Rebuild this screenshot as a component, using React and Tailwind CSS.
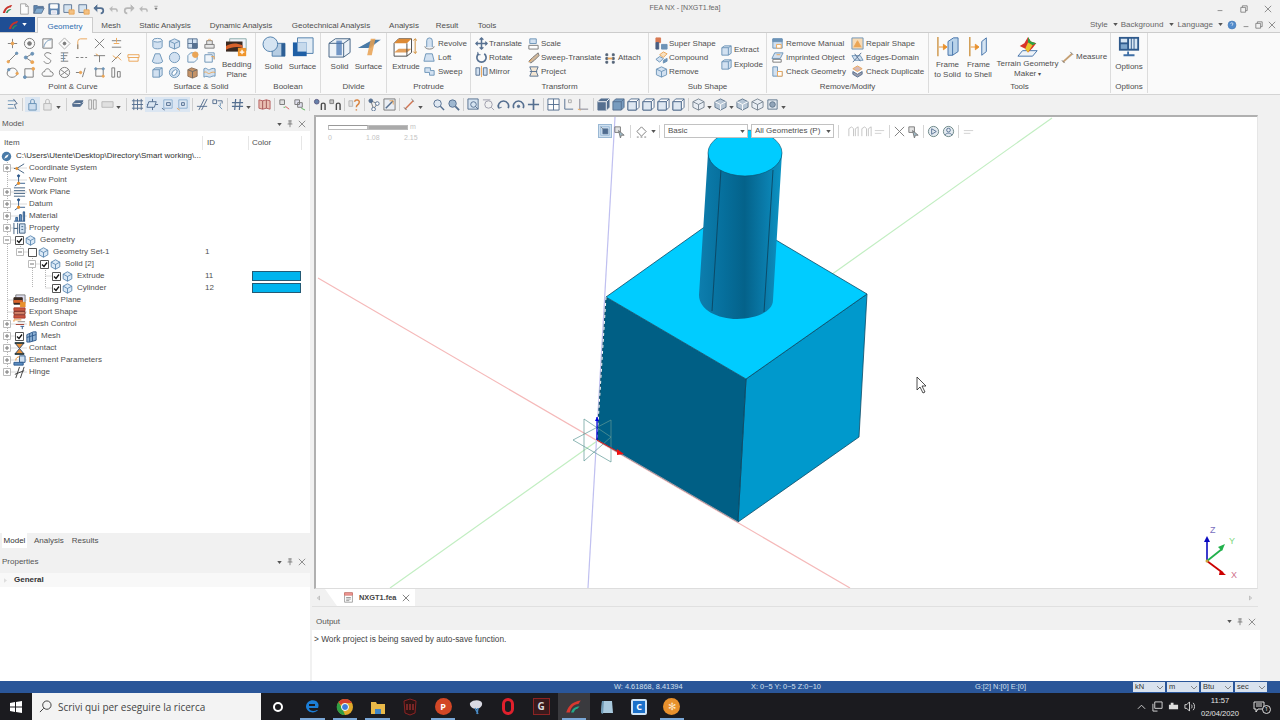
import React from "react";

const B = "#4a7ba8", D = "#5a5a5a", O = "#e8912d", L = "#c9dcef", K = "#2f4f78";
const p = (d, s = B, f = "none", w = 1) => <path d={d} stroke={s} fill={f} strokeWidth={w} />;
const c = (x, y, r, s = B, f = "none") => <circle cx={x} cy={y} r={r} stroke={s} fill={f} />;
const G = {
  point: <>{p("M7 2v10M2 7h10", D)}{c(7, 7, 1.5, O, O)}</>,
  target: <>{c(7, 7, 5.5, D)}{c(7, 7, 2, D, D)}</>,
  boxarc: <>{p("M2 2h10v10H2z", D)}{p("M3 11C4 6 7 3 11 3", B)}</>,
  diamond: <>{p("M7 1l6 6-6 6-6-6z", "#999")}{c(7, 7, 1.5, D, D)}</>,
  corner: <>{p("M3 13V5q0-3 3-3h7", O)}{p("M3 13V8", D)}</>,
  cross: <>{p("M2 2l10 10M12 2L2 12", D)}</>,
  tee: <>{p("M2 4h10M2 11h10", D)}{p("M7 1v5", O)}{p("M4 7h6", O)}</>,
  line: <>{p("M2 12L12 2", D)}{c(2.5, 11.5, 1.3, O, O)}{c(11.5, 2.5, 1.3, B, B)}</>,
  nodes: <>{p("M3 7L10 3M3 7l7 5", D)}{c(3, 7, 1.6, B, B)}{c(10, 3, 1.6, B, B)}{c(10, 12, 1.6, O, O)}</>,
  scurve: <>{p("M11 3C6 0 2 3 5 6s7 3 5 6-6 1-7-1", D)}</>,
  stack: <>{p("M3 2h8M3 5h7M3 8h5M3 11h8", D)}{p("M6 2v9", B)}</>,
  dash: <>{p("M1 7h3M6 7h3M11 7h2", D)}</>,
  tick: <>{p("M1 5h12", D)}{p("M7 5v7", D)}{p("M3 3l3 2", O)}</>,
  bolt: <>{p("M2 12L12 2", D)}{p("M3 5l4 3 1-2 4 4", O)}</>,
  tray: <>{p("M1 4h12v3H1zM2 7v4h10V7", O)}</>,
  loop: <>{p("M3 4C6 1 11 2 12 6s-3 7-7 6-5-5-2-8", D)}{c(3, 4, 1.3, B, B)}{c(12, 8, 1.3, O, O)}</>,
  sqdot: <>{p("M2 3h9v9H2z", D)}{c(11, 3, 1.5, O, O)}{c(2, 12, 1.5, B, B)}</>,
  cloud: <>{p("M3 11C0 10 1 6 4 6c0-4 6-4 6 0 4 0 4 5 1 5z", D)}</>,
  elx: <>{c(7, 7, 5.5, D)}{p("M3 4l8 6M11 4l-8 6", D)}</>,
  slash: <>{p("M1 7h5", D)}{p("M8 12l3-10", D)}{c(6, 7, 1.3, O, O)}</>,
  rect: <>{p("M3 3h8v8H3z", D)}{c(3, 3, 1.2, B, B)}{c(11, 11, 1.2, O, O)}{c(11, 3, 1.2, B, B)}</>,
  bars: <>{p("M2 2h3v10H2zM8 6h3v6H8z", D)}</>,
  cyl: <>{p("M2 3.5v7c0 3 10 3 10 0v-7", B, L)}<ellipse cx="7" cy="3.5" rx="5" ry="2" stroke={B} fill="#eaf2fa" /></>,
  cube: <>{p("M1.5 4.5L7 2l5.500 2.500v6L7 13l-5.500-2.500z", B, L)}{p("M1.500 4.500L7 7l5.500-2.500M7 7v6", B)}</>,
  box: <>{p("M2 4l3-2h7v8l-3 2H2z", B, L)}{p("M2 4h7v8M9 4l3-2", B)}</>,
  grid: <>{p("M2 2h10v10H2zM7 2v10M2 7h10", K, L)}{p("M7 7h5v5H7z", K, K)}</>,
  seat: <>{p("M2 12V8h10v4zM4 8V4h6v4", D, "#e3e3e3")}{p("M5 4l2-2 2 2", O)}</>,
  cone: <>{p("M4.500 3h5l3 8c0 3-11 3-11 0z", B, L)}</>,
  sphere: <>{c(7, 7, 5.5, B, L)}</>,
  boxo: <>{p("M2 5l3-3h7v7l-3 3H2z", B, "#eef4fa")}{c(10, 4, 3, O, O)}</>,
  boxs: <>{p("M2 4h8v8H2z", B, "#eef4fa")}{p("M5 2h7v7", B)}{p("M9 6h3v3", O)}</>,
  ring: <>{c(7, 7, 5.5, B, L)}<ellipse cx="7" cy="7" rx="2" ry="3.5" stroke={B} fill="#fff" transform="rotate(40 7 7)" /></>,
  boxdark: <>{p("M2 4l4-2 6 2v7l-5 2-5-2z", "#7a5130", "#b97a43")}{p("M7 6v7M2 4l5 2 5-2", "#444")}</>,
  wave: <>{p("M1 3c3-2 4 2 6 1s3-2 6-1v8c-3-1-4 1-6 1s-3-2-6 0z", B, L)}{p("M1 7c3-2 4 2 6 1s3-2 6-1", O)}</>,
  revolve: <>{p("M4 11V4a3 3 0 016 0v7", B, L)}{p("M2 10c0 4 10 4 10 0", D)}</>,
  loft: <>{p("M3 3h7l2 8H1z", B, L)}</>,
  sweep: <>{p("M2 3h6v3h4v5H7V8H2z", B, L)}</>,
  move: <>{p("M7 1v12M1 7h12", K, "none", 1.6)}{p("M5 3l2-2 2 2M5 11l2 2 2-2M3 5L1 7l2 2M11 5l2 2-2 2", K, "none", 1.4)}</>,
  rotate: <>{p("M10 3a5 5 0 11-6 0", K, "none", 1.8)}{p("M3 1v3h3", K)}</>,
  mirror: <>{p("M1 3h4v8H1zM9 3h4v8H9z", K, L)}{p("M7 1v12", O)}</>,
  scale: <>{p("M3 2h7v5H3z", B, L)}{p("M2 9h10v4H2z", D, "#fff")}</>,
  swtr: <>{p("M2 11l4-4 6-5 1 3-5 5-4 3z", D, "#c8a884")}{p("M2 12l3-3", O)}</>,
  project: <>{p("M3 2h9l-2 5 2 5H3l2-5z", K, "#f3e2c9")}{p("M3 7h8", K)}</>,
  attach: <>{p("M2 2h2v2H2zM2 6h2v2H2zM2 10h2v2H2zM9 2h2v2H9zM9 6h2v2H9zM9 10h2v2H9z", "#2b3f58", "#2b3f58")}{p("M4 7h5", O, "none", 2)}</>,
  super: <>{p("M1 1h5v5H1z", "#d05a2a", "#d05a2a")}{p("M1 6h3v7H1z", "#1f3864", "#1f3864")}{p("M7 8h6v5H7z", B, B)}</>,
  compound: <>{p("M1 9l4-3 4 2-4 4z", B, L)}{p("M5 4l4-3 4 2-4 4z", O, "#f8dcb4")}{p("M9 10l4-2v3l-4 2z", B, B)}</>,
  rmanual: <>{p("M2 2h10v10H2z", B, L)}{p("M2 2h10v3H2z", B, B)}{p("M6 8h5v4H6z", O, "#fff")}</>,
  imprint: <>{p("M1 8l3-6h9l-3 6z", B, L)}{p("M2 9h9v3H2z", D, "#fff")}{p("M6 4h4", O)}</>,
  check: <>{p("M2 2h5v5h5v5H2z", B, L)}{p("M7 7h5v5H7z", O, "#fff")}</>,
  repair: <>{p("M1 1h12v12H1z", B, "#f7d3a4")}{p("M3 11l4-7 4 7", O, O)}</>,
  edges: <>{p("M1 5h9l3 5H4z", B, L)}{p("M2 12L11 2", K)}{p("M4 3l6 8", K)}</>,
  cdup: <>{p("M7 1l5 3-5 3-5-3z", O, "#caa")}{p("M2 7l5 3 5-3v3l-5 3-5-3z", K, "#889")}</>,
  measure: <>{p("M2 12L12 3", "#b98a52", "none", 2)}{p("M1 10l3 3M10 1l3 3", D)}</>,
  help: <>{c(7, 7, 5.5, "#1f5fa8", "#2c74c4")}{p("M5 5c1-2 4-1 3 1l-1 2", "#fff")}</>,
  sel: <>{p("M1 1h12v12H1z", "#7aa3c9", "#cfe0f0")}{p("M4 4h7v7H4z", K, K)}{p("M1 1l4 4", D)}</>,
  sel2: <>{p("M2 2h6v6H2z", D, "#ddd")}{p("M6 6l6 5-3 0-1 3z", D, "#8ab")}</>,
  flash: <>{p("M2 7l5-5 5 5-5 5z", D)}{p("M2 13h2M6 13h2M10 13h2", D)}</>,
  run: <>{p("M2 3h8M2 7h6M2 11h7", B)}{p("M8 1l4 5-3 1 2 5", K)}</>,
  lock: <>{p("M3 6h8v7H3z", B, L)}{p("M5 6V3c0-2 4-2 4 0v3", B)}</>,
  lockg: <>{p("M3 6h8v7H3z", "#aaa", "#e5e5e5")}{p("M5 6V3c0-2 4-2 4 0v3", "#aaa")}</>,
  eraser: <>{p("M2 6l3-3h8l-3 4H2zM2 6v3h8l3-4", K, K)}</>,
  link: <>{p("M3 2h3v10H3zM8 2h3v10H8z", "#8a8a8a", "#eee")}</>,
  pill: <>{p("M1 4h12v6H1z", "#aaa", "#ddd")}</>,
  gridb: <>{p("M1 3h12M1 7h12M1 11h12M3 1v12M7 1v12M11 1v12", K)}</>,
  plane: <>{p("M1 7h12M7 1v12", K)}{p("M3 4h8l-2 6H1z", K, "#dbe7f3")}</>,
  lbl: <>{p("M3 2h9v9H3z", "#7aa3c9", "#dbe7f3")}{p("M1 11l3 2", K)}{p("M6 5h4v3H6z", K)}</>,
  lbl2: <>{p("M3 2h9v9H3z", "#7aa3c9", "#dbe7f3")}{p("M1 11l3 2", O)}{p("M6 5h3v3H6z", K)}</>,
  fence: <>{p("M3 13L9 1M6 13L12 1M1 9h11", K)}</>,
  mesh: <>{p("M2 2h4v4H2z", K)}{p("M8 8l4 4M10 5v4", B)}{p("M7 3h5v3", K)}</>,
  hash: <>{p("M5 1L4 13M10 1L9 13M1 5h12M1 9h12", K, "none", 1.3)}</>,
  map: <>{p("M1 2l4 1 4-1 4 1v9l-4-1-4 1-4-1z", "#a83a3a", "#e8b3a4")}{p("M5 3v9M9 2v9", "#8c2b2b")}</>,
  c1: <>{p("M2 2h5v5H2z", D, "#ddd")}{p("M8 9l4 3", "#c33")}{p("M6 10h2", "#3a3")}</>,
  c2: <>{p("M2 2h5v5H2zM5 5h5v5H5z", D, "#dde")}{p("M9 11l4 2", "#3a3")}</>,
  n1: <>{c(4, 4, 2.5, "#336", "#469")}{p("M9 13V7c0-2 4-2 4 0v6", "#222", "none", 1.5)}</>,
  n2: <>{p("M2 2h4v4H2z", "#666", "#bbb")}{p("M9 13V7c0-2 4-2 4 0v6", "#222", "none", 1.5)}</>,
  q: <>{p("M1 3h4v6H1z", "#aaa", "#ddd")}{p("M7 4c1-3 6-2 5 1s-3 2-3 5M9 12v1.5", "#d36a16", "none", 1.6)}</>,
  nd: <>{p("M3 3l7 3-4 6z", D)}{c(3, 3, 2, K, K)}{c(10, 6, 2, K, "#fff")}{c(6, 12, 2, K, "#fff")}</>,
  frame: <>{p("M1 1h12v12H1z", D, "#e9eef5")}{p("M3 11L11 3", K, "none", 1.6)}{p("M7 3h4v4", O)}</>,
  ruler: <>{p("M2 12L11 3", "#c9552a", "none", 1.5)}{p("M1 10l3 3M9 1l3 3", D)}</>,
  zoom: <>{c(6, 6, 4, K, "#dbe7f3")}{p("M9 9l4 4", K, "none", 1.5)}</>,
  zoomd: <>{c(6, 6, 4, K, "#8aa9c9")}{p("M9 9l4 4", K, "none", 2)}</>,
  fit: <>{p("M1 1h11v11H1z", K, "#cfe0f0")}{c(7, 7, 3, K)}{p("M9 9l3 3", K)}</>,
  zsel: <>{p("M1 2h8", "#889")}{c(7, 7, 4, "#889")}{p("M10 10l3 3", "#889")}</>,
  rot: <>{p("M2 11a5.5 5.5 0 1110 0", K, "none", 1.8)}{p("M1 8l1 3 3-1", K)}</>,
  rot2: <>{p("M12 11a5.5 5.5 0 10-10 0", K, "none", 1.8)}{c(7, 9, 1.3, K, K)}</>,
  pan: <>{p("M7 1v12M1 7h12", K, "none", 1.8)}</>,
  win: <>{p("M1 1h12v12H1zM7 1v12M1 7h12", K, "#fff")}</>,
  axl: <>{p("M3 1v11h9", K)}{p("M7 2h3v3H7z", "#999")}</>,
  axr: <>{p("M3 1v11h9", "#667")}{p("M1 12l3 1", O)}</>,
  vfull: <>{p("M1 4l3-3h9v9l-3 3H1z", K, K)}{p("M1 4h9v9M10 4l3-3", "#fff")}</>,
  vtop: <>{p("M1 4l3-3h9v9l-3 3H1z", K, "#5a87b3")}{p("M1 4h9v9M10 4l3-3", K)}</>,
  vside: <>{p("M1 4l3-3h9v9l-3 3H1z", K, "#fff")}{p("M1 4h9v9M10 4l3-3", K)}{p("M1 4h9v9H1z", K, "#dbe7f3")}</>,
  iso: <>{p("M7 1l6 3v6l-6 3-6-3V4z", "#5a6a7a", "#e6edf4")}{p("M1 4l6 3 6-3M7 7v6", "#5a6a7a")}</>,
  isod: <>{p("M7 1l6 3v6l-6 3-6-3V4z", "#3e5a76", "#a9bccf")}{p("M1 4l6 3 6-3M7 7v6", "#fff")}</>,
  isosq: <>{p("M2 2h10v10H2z", "#3e5a76", "#dfe7ef")}{c(7, 7, 3, "#3e5a76", "#7a92aa")}</>,
  f1: <>{p("M2 12V4l3-2 2 2v8M9 12V4l3-2v10", "#b5b5b5")}</>,
  f2: <>{p("M2 6h10M2 9h7", "#c5c5c5")}</>,
  disp: <>{c(7, 7, 5.5, "#466", "#dde6ee")}{p("M5 4l5 3-5 3z", K)}</>,
  disp2: <>{c(7, 7, 5.5, "#466", "#dde6ee")}{c(7, 5.5, 2, K)}{p("M3 11c2-3 6-3 8 0", K)}</>,
  doc: <>{p("M3 1h6l3 3v9H3z", "#888", "#fff")}{p("M9 1v3h3", "#888")}</>,
  docr: <>{p("M2 1h10v12H2z", "#777", "#fff")}{p("M2 1h10v3H2z", "#c94a3a", "#e88")}{p("M4 7h6M4 9h6M4 11h4", "#666")}</>,
  open: <>{p("M1 3h4l1 1h6v2H4l-3 6z", K, "#3a6ea5")}{p("M4 6h9l-3 6H1z", K, "#6a9bc9")}</>,
  save: <>{p("M1 1h12v12H1z", K, "#3f6fa6")}{p("M3 2h8v4H3z", "#fff", "#fff")}{p("M4 9h6v4H4z", "#fff", "#dde")}</>,
  saveas: <>{p("M1 2h9v9H1z", K, "#cfe0f0")}{p("M7 8h6v5H7z", O, "#f4b66a")}</>,
  undo: <>{p("M2 6h7c4 0 4 6 0 6", "#2c4f7a", "none", 2)}{p("M5 2L1 6l4 4", "#2c4f7a", "#2c4f7a")}</>,
  undog: <>{p("M3 7h6c2 0 2 3 1 3", "#aaa", "none", 1.5)}{p("M5 4L2 7l3 3", "#aaa", "#aaa")}</>,
  redo: <>{p("M12 6H5c-4 0-4 6 0 6", "#aaa", "none", 2)}{p("M9 2l4 4-4 4", "#aaa", "#aaa")}</>,
  caret: <>{p("M4 4h6", "#555")}{p("M5 7h4l-2 3z", "#555", "#555")}</>,
  coord: <>{p("M12 2L4 7l8 5", "#3f5f80")}{p("M1 7h3", "#3f5f80")}{c(4, 7, 1.2, O, O)}</>,
  vp: <>{p("M6 2v8M6 10H13M6 10L2 13", "#2f5a8c")}{c(6, 2, 1.2, "#2f5a8c", "#2f5a8c")}{c(6, 10, 1.3, O, O)}</>,
  wplane: <>{p("M1 2h12M1 5h12M1 8h12M1 11h12", "#3f5f80")}</>,
  matl: <>{p("M1 12h12M3 12V8h2v4M7 12V5h2v7M11 12V2h1.500v10", "#2f5a8c", "#6f9ac5")}</>,
  prop: <>{p("M1 1v12M5 1v12M1 7h4", "#3f5f80")}{p("M7 2h6v10H7z", "#3f5f80", "#cfe0f0")}{p("M9 5h2M9 8h2", "#3f5f80")}</>,
  bedding: <>{p("M3 1h10v9H3z", "#777", "#dde")}{p("M1 4h9v7H1z", "#3a2a22", "#3a2a22")}{p("M1 7h9v2H1z", "#d9622b", "#d9622b")}{p("M8 9h5v5H8z", O, O)}</>,
  export: <>{p("M1 2h12v3H1z", "#a83a2a", "#c9553f")}{p("M1 6h12v3H1z", "#7a2a20", "#d88a70")}{p("M1 10h12v3H1z", "#a83a2a", "#c9553f")}</>,
  meshc: <>{p("M1 4V2h8", O)}{p("M13 4H5", "#888")}{p("M3 7h9", "#a83a2a")}{p("M10 12V9M8 9h4", "#2f5a8c")}</>,
  meshb: <>{p("M2 5l7-3h3v9l-7 2H2z", "#2f5a8c", "#8fb3d6")}{p("M5 4v9M8 3v9M2 8l10-3", "#2f5a8c")}</>,
  hour: <>{p("M2 1h10L7 7l5 6H2l5-6z", "#2f4f78", "#e8913a")}{p("M2 1h10M2 13h10", "#233", "none", 1.6)}</>,
  elem: <>{p("M7 2h6v7H7z", "#2f5a8c", "#cfe0f0")}{p("M1 9h10v3H1z", "#2f5a8c", "#5a8cc0")}{p("M3 7c0-3 2-4 4-4", O)}</>,
  hinge: <>{p("M3 13L7 1M8 13l4-12M2 9l10-4", "#3a3a3a")}</>,
};
const I = ({ n, s = "w-[13px] h-[13px]" }) => (
  <svg viewBox="0 0 14 14" fill="none" className={`${s} shrink-0 opacity-80`}>{G[n]}</svg>
);
const Big = ({ children }) => (
  <svg viewBox="0 0 28 24" fill="none" className="w-[26px] h-[22px] shrink-0">{children}</svg>
);
const Win = ({ k, color = "#777" }) => (
  <svg viewBox="0 0 10 10" fill="none" stroke={color} className="w-[8px] h-[8px]">
    {k === "min" && <path d="M2 7h6" />}
    {k === "max" && <path d="M1 3h6v6H1zM3 3V1h6v6H7" />}
    {k === "pin" && <path d="M3 1h4M4 1v4M6 1v4M2 5h6M5 5v4" />}
    {k === "x" && <path d="M1 1l8 8M9 1l-8 8" />}
  </svg>
);
const Caret = () => (
  <svg viewBox="0 0 6 4" className="w-[5px] h-[3px] shrink-0"><path d="M0 0h6L3 4z" fill="#555" /></svg>
);

const Group = ({ label, w, children }) => (
  <div className={`${w} flex flex-col border-r border-[#dcdcdc] h-full shrink-0`}>
    <div className="flex-1 flex min-h-0">{children}</div>
    <div className="h-[14px] text-center leading-[15px]">{label}</div>
  </div>
);
const BigBtn = ({ w, t1, t2, children }) => (
  <div className={`${w} flex flex-col items-center pt-[3px] shrink-0`}>
    <div className="h-[26px] flex items-start">{children}</div>
    <div className="leading-[9.5px] text-center whitespace-nowrap">{t1}<br />{t2}</div>
  </div>
);
const Item = ({ n, t, gap = "gap-[1px]" }) => (
  <div className={`h-[14.5px] flex items-center ${gap} whitespace-nowrap`}><I n={n} /><span>{t}</span></div>
);
const Cols = ({ w, children }) => <div className={`${w} flex flex-col pt-[3.5px] shrink-0`}>{children}</div>;
const GridI = ({ cols, items }) => (
  <div className={`${cols} grid auto-rows-[14.5px] pt-[3px] shrink-0`}>
    {items.map((n, i) => (
      <div key={i} className="flex items-center justify-center">{n && <I n={n} />}</div>
    ))}
  </div>
);

const tb = [
  "i:run", "s", "a:lock", "i:lockg", "d", "S", "i:eraser", "i:link", "i:pill", "d", "S", "i:gridb", "a:plane", "a:lbl", "a:lbl2", "s",
  "i:fence", "i:mesh", "s", "i:hash", "d", "s", "i:map", "s", "i:c1", "i:c2", "s", "i:n1", "i:n2", "s", "i:q", "s", "i:nd", "i:frame", "s", "i:ruler", "d", "p",
  "i:zoom", "i:zoomd", "s", "i:fit", "i:zsel", "i:rot", "i:rot2", "i:pan", "s", "i:win", "i:axl", "i:axr", "s", "i:vfull", "i:vtop", "i:vside", "i:vside", "i:vside", "i:vside", "s",
  "i:iso", "d", "i:isod", "d", "i:isod", "i:iso", "i:isosq", "d",
];
const TbItem = ({ v }) => {
  if (v === "s") return <div className="w-[5px] h-[13px] flex justify-center"><div className="w-px h-full bg-[#cfcfcf]" /></div>;
  if (v === "S") return <div className="w-[8px] h-[13px] flex justify-center"><div className="w-px h-full bg-[#cfcfcf]" /></div>;
  if (v === "p") return <div className="w-[7px]" />;
  if (v === "d") return <div className="w-[7px] flex justify-center pt-[7px]"><Caret /></div>;
  const [k, n] = v.split(":");
  return (
    <div className={`w-[15px] h-[15px] flex items-center justify-center ${k === "a" ? "bg-[#dbe6f2]" : ""}`}><I n={n} /></div>
  );
};

const Exp = ({ o }) => (
  <svg viewBox="0 0 8 8" fill="none" className="w-[8px] h-[8px] shrink-0 bg-white">
    <path d="M.5.5h7v7h-7z" stroke="#bbb" />
    <path d={o ? "M2 4h4" : "M2 4h4M4 2v4"} stroke="#777" />
  </svg>
);
const Chk = ({ on = true }) => (
  <svg viewBox="0 0 9 9" fill="none" className="w-[9px] h-[9px] shrink-0 bg-white">
    <path d="M.5.5h8v8h-8z" stroke="#555" />
    {on && <path d="M2 4.5l2 2 3-4" stroke="#111" strokeWidth="1.3" />}
  </svg>
);
const Cu = () => (
  <svg viewBox="0 0 14 14" fill="none" className="w-[11px] h-[11px] shrink-0">
    <path d="M1.5 4L7 1l5.5 3v6L7 13l-5.5-3z" stroke="#4a7ba8" fill="#dbe9f6" />
    <path d="M1.5 4L7 7l5.5-3M7 7v6" stroke="#4a7ba8" />
  </svg>
);
const TI = ({ n }) => (
  <svg viewBox="0 0 14 14" fill="none" className="w-[13px] h-[13px] shrink-0">{G[n]}</svg>
);
const Tree0 = ({ exp = true, n, t }) => (
  <div className="h-3 flex items-center pl-[3px] whitespace-nowrap">
    {exp ? <Exp /> : <div className="w-[8px]" />}
    <div className="ml-[2px]"><TI n={n} /></div>
    <span className="ml-[3px]">{t}</span>
  </div>
);
const Swatch = () => <div className="w-[49px] h-[10px] bg-[#00b4ee] border border-[#235a75]" />;
const TreeCk = ({ pad, exp, o, on, t, id, sw, gap }) => (
  <div className="h-3 flex items-center relative whitespace-nowrap">
    <div className={`${pad} flex items-center w-[205px] shrink-0`}>
      {exp && <Exp o={o} />}
      <div className={`${gap} flex items-center`}><Chk on={on} /></div>
      <div className="ml-[1px]"><Cu /></div>
      <span className="ml-[4px]">{t}</span>
    </div>
    <div className="w-[47px] shrink-0">{id}</div>
    {sw && <Swatch />}
  </div>
);

const tbIcons = (
  <>
    <div className="w-[14px] h-[14px] bg-[#cfe0f0] border border-[#9ab8d4] flex items-center justify-center"><I n="sel" s="w-[10px] h-[10px]" /></div>
    <div className="ml-[1px]"><I n="sel2" /></div>
    <div className="w-px h-[13px] bg-[#d5d5d5] ml-[4px]" />
    <div className="ml-[4px]"><I n="flash" /></div>
    <div className="ml-[3px]"><Caret /></div>
    <div className="w-px h-[13px] bg-[#d5d5d5] ml-[3px]" />
  </>
);

const Combo = ({ w, t }) => (
  <div className={`${w} h-[14px] bg-white border border-[#c2c2c2] flex items-center pl-[3px] pr-[2px] justify-between shrink-0`}>
    <span>{t}</span><Caret />
  </div>
);

const Scene = () => (
  <svg viewBox="316 117 940 471" className="absolute inset-0 w-[940px] h-[471px]" fill="none">
    <defs>
      <linearGradient id="cyl" x1="0" x2="1" y1="0" y2="0">
        <stop offset="0" stopColor="#0d7eae" />
        <stop offset="0.3" stopColor="#066f9c" />
        <stop offset="0.55" stopColor="#04628a" />
        <stop offset="0.8" stopColor="#0a7cab" />
        <stop offset="1" stopColor="#0b94c4" />
      </linearGradient>
    </defs>
    <path d="M318 278L850 588" stroke="#f5b9b9" strokeWidth="1.2" />
    <path d="M390 588L1052 118" stroke="#c2eec2" strokeWidth="1.2" />
    <path d="M615 117L588 588" stroke="#c0c0f0" strokeWidth="1.2" />
    <path d="M606 297L746 379L738 522L597 440Z" fill="#005f85" />
    <path d="M746 379L867 294L859 437L738 522Z" fill="#0099cc" stroke="#0c4a66" strokeWidth="0.8" />
    <path d="M606 297L727 211L867 294L746 379Z" fill="#00ccff" stroke="#0c4a66" strokeWidth="0.8" />
    <path d="M746 379L738 522L597 440" stroke="#0c4a66" strokeWidth="0.8" />
    <path d="M597 440L738 522" stroke="#e8c4c4" strokeWidth="0.6" />
    <path d="M606 297L597 440" stroke="#0c4a66" strokeWidth="1" />
    <path d="M606 297L597 440" stroke="#fff" strokeWidth="1" strokeDasharray="3 3" />
    <path d="M708 153L699 295C699 310 718 319 737 319C755 319 773 312 773 300L782 153Z" fill="url(#cyl)" />
    <path d="M721 169L712 311M773 170L764 312" stroke="#0c3f58" strokeWidth="0.8" />
    <ellipse cx="745" cy="153" rx="37" ry="23" fill="#00ccff" stroke="#0c4a66" strokeWidth="0.6" />
    <path d="M584 419L584 461L611 437ZM573 440L611 462L611 420Z" stroke="#5f9a96" strokeWidth="0.7" />
    <path d="M597 440V417" stroke="#0000e0" strokeWidth="1.2" />
    <path d="M595 421l2-4 2 4z" fill="#0000e0" />
    <path d="M597 440L622 454" stroke="#d81414" strokeWidth="1" />
    <path d="M617 449l7 5-7 1z" fill="#ef1010" />
    <path d="M1207 561V540" stroke="#0a0ac0" strokeWidth="1.6" />
    <path d="M1204 542l3-6 3 6z" fill="#0a0ac0" />
    <path d="M1207 561L1222 549" stroke="#22b14c" strokeWidth="1.8" />
    <path d="M1218 547l7-3-3 7z" fill="#22b14c" />
    <path d="M1207 561L1223 573" stroke="#c00" strokeWidth="1.8" />
    <path d="M1220 570l6 5-7 0z" fill="#c00" />
    <circle cx="1207" cy="561" r="1.5" fill="#c9a23a" />
    <path d="M917 377v13l3-3 3 6 2-1-3-6h4z" fill="#fff" stroke="#222" strokeWidth="0.8" />
  </svg>
);

const Tray = ({ children }) => <div className="w-[16px] flex justify-center">{children}</div>;
const TApp = ({ active, on, children }) => (
  <div className={`w-[32.7px] h-full flex items-center justify-center relative shrink-0 ${active ? "bg-[#3a3a3e]" : ""}`}>
    {children}
    {on && <div className="absolute bottom-0 left-[4px] right-[4px] h-[2px] bg-[#7aa7d6]" />}
  </div>
);
const A = ({ children }) => <svg viewBox="0 0 18 18" fill="none" className="w-[18px] h-[18px]">{children}</svg>;

export default function App() {
  return (
    <div className="w-[1280px] h-[720px] overflow-hidden flex flex-col bg-[#f1f1f1] text-[#4f4f4f] text-[8px] font-['Liberation_Sans',sans-serif]">
      {/* title */}
      <div className="h-[17px] flex items-center shrink-0 relative">
        <svg viewBox="0 0 14 12" className="w-[11px] h-[10px] ml-[2px] shrink-0">
          <path d="M1 11C3 5 6 2 13 1L11 4C7 4 5 7 4 11z" fill="#c8332b" />
          <path d="M5 11C6 8 8 6 12 6L10 8C8 8 8 10 7 11z" fill="#2d8f5c" />
        </svg>
        <div className="flex ml-[3px]">
          {["doc", "open", "save", "saveas", "saveas", "undo", "undog", "redo", "undog"].map((n, i) => (
            <div key={i} className="w-[15px] flex justify-center"><I n={n} s="w-[12px] h-[12px]" /></div>
          ))}
          <div className="w-[10px] flex justify-center"><I n="caret" s="w-[8px] h-[10px]" /></div>
        </div>
        <div className="absolute left-[585px] w-[200px] text-center text-[#666] text-[7.1px]">FEA NX - [NXGT1.fea]</div>
        <div className="ml-auto flex items-center">
          <div className="w-[24px] flex justify-center"><Win k="min" /></div>
          <div className="w-[24px] flex justify-center"><Win k="max" /></div>
          <div className="w-[24px] flex justify-center"><Win k="x" /></div>
        </div>
      </div>
      {/* tabs */}
      <div className="h-[16px] flex shrink-0 text-center border-b border-[#cccccc] leading-[17px] relative">
        <div className="w-[35px] h-[15px] bg-[#1f4e94] flex items-center justify-center gap-[3px]">
          <svg viewBox="0 0 14 12" className="w-[11px] h-[10px]">
            <path d="M1 11C3 5 6 2 13 1L11 4C7 4 5 7 4 11z" fill="#c8332b" />
            <path d="M5 11C6 8 8 6 12 6L10 8C8 8 8 10 7 11z" fill="#2d8f5c" />
          </svg>
          <svg viewBox="0 0 6 4" className="w-[5px] h-[3px]"><path d="M0 0h6L3 4z" fill="#fff" /></svg>
        </div>
        <div className="w-[56px] ml-[2px] h-[16px] bg-[#fafafa] border border-b-0 border-[#cccccc] text-[#2f6db0]">Geometry</div>
        <div className="w-[36px]">Mesh</div>
        <div className="w-[72px]">Static Analysis</div>
        <div className="w-[80px]">Dynamic Analysis</div>
        <div className="w-[100px]">Geotechnical Analysis</div>
        <div className="w-[46px]">Analysis</div>
        <div className="w-[40px]">Result</div>
        <div className="w-[40px]">Tools</div>
        <div className="ml-auto flex items-center text-[#666] pr-[4px]">
          <span>Style</span><div className="ml-[5px]"><Caret /></div>
          <span className="ml-[3px]">Background</span><div className="ml-[6px]"><Caret /></div>
          <span className="ml-[3px]">Language</span><div className="ml-[5px]"><Caret /></div>
          <div className="ml-[4px]"><I n="help" s="w-[10px] h-[10px]" /></div>
          <div className="ml-[5px]"><Win k="min" /></div>
          <div className="ml-[5px]"><Win k="max" /></div>
          <div className="ml-[5px]"><Win k="x" /></div>
        </div>
      </div>
      {/* ribbon */}
      <div className="h-[62px] flex shrink-0 bg-[#fafafa] border-b border-[#d4d4d4] pb-[1px]">
        <Group label="Point & Curve" w="w-[147px]">
          <div className="pl-[4px]">
            <GridI cols="grid-cols-[repeat(8,17.3px)]" items={[
              "point", "target", "boxarc", "diamond", "corner", "cross", "tee", null,
              "line", "nodes", "scurve", "stack", "dash", "tick", "bolt", "tray",
              "loop", "sqdot", "cloud", "elx", "slash", "rect", "bars", null,
            ]} />
          </div>
        </Group>
        <Group label="Surface & Solid" w="w-[109px]">
          <div className="pl-[2px]">
            <GridI cols="grid-cols-[repeat(4,17.3px)]" items={["cyl", "cube", "grid", "seat", "cone", "sphere", "boxo", "boxs", "box", "ring", "boxdark", "wave"]} />
          </div>
          <BigBtn w="w-[37px]" t1="Bedding" t2="Plane">
            <Big>
              <path d="M6 3h18v13H6z" stroke="#8aa" fill="#eef2f6" />
              <path d="M2 6h18v11H2z" fill="#3a2a22" />
              <path d="M2 11c5-3 10-4 18-1v3c-6-2-12-1-18 2z" fill="#d9622b" />
              <path d="M15 13h9v9h-9z" fill="#f0952b" />
              <path d="M19.5 15v5M17 17.5h5" stroke="#fff" strokeWidth="1.4" />
            </Big>
          </BigBtn>
        </Group>
        <Group label="Boolean" w="w-[65px]">
          <div className="pl-[3px] flex">
            <BigBtn w="w-[29px]" t1="Solid">
              <Big>
                <path d="M12 8h14v14H12z" fill="#b6cde3" stroke="#4a7ba8" />
                <path d="M22 8h4v14h-4z" fill="#2d5f96" />
                <circle cx="10" cy="9" r="8" fill="#d5e4f2" stroke="#4a7ba8" />
              </Big>
            </BigBtn>
            <BigBtn w="w-[29px]" t1="Surface">
              <Big>
                <path d="M8 2h17v17H8z" fill="#e2ecf5" stroke="#4a7ba8" />
                <path d="M3 7h15v15H3z" fill="#1f5fa5" />
                <path d="M8 7h10v10H8z" fill="#c7daec" />
              </Big>
            </BigBtn>
          </div>
        </Group>
        <Group label="Divide" w="w-[66px]">
          <div className="pl-[4px] flex">
            <BigBtn w="w-[29px]" t1="Solid">
              <Big>
                <path d="M2 8l7-5h16v15l-7 5H2z" fill="#eef3f8" stroke="#3f5f80" />
                <path d="M2 8h16v15M18 8l7-5" stroke="#3f5f80" />
                <path d="M10 5h6v16h-6z" fill="#3e6fb0" opacity="0.7" />
              </Big>
            </BigBtn>
            <BigBtn w="w-[29px]" t1="Surface">
              <Big>
                <path d="M2 13L18 4h9l-14 9z" fill="#4a7ba8" />
                <path d="M2 13h14l9-8-6 0z" fill="#4a7ba8" opacity="0.6" />
                <path d="M12 21l4-18 5 0-4 18z" fill="#e8a050" opacity="0.85" />
              </Big>
            </BigBtn>
          </div>
        </Group>
        <Group label="Protrude" w="w-[84px]">
          <div className="pl-[2px]">
            <BigBtn w="w-[34px]" t1="Extrude">
              <Big>
                <path d="M1 8l5-5h14v15l-5 4H1z" fill="#fff" stroke="#444" />
                <path d="M1 8h14l5-5H6z" fill="#dd8a35" />
                <path d="M1 18h14l5-4H6z" fill="#dd8a35" opacity="0.8" />
                <path d="M15 8v14" stroke="#444" />
                <path d="M24 3v16M22 5l2-2 2 2M22 17l2 2 2-2" stroke="#d08a30" />
              </Big>
            </BigBtn>
          </div>
          <Cols w="w-[46px]">
            <Item n="revolve" t="Revolve" gap="gap-[2px]" />
            <Item n="loft" t="Loft" gap="gap-[2px]" />
            <Item n="sweep" t="Sweep" gap="gap-[2px]" />
          </Cols>
        </Group>
        <Group label="Transform" w="w-[178px]">
          <div className="pl-[4px] flex">
            <Cols w="w-[52px]">
              <Item n="move" t="Translate" />
              <Item n="rotate" t="Rotate" />
              <Item n="mirror" t="Mirror" />
            </Cols>
            <Cols w="w-[77px]">
              <Item n="scale" t="Scale" />
              <Item n="swtr" t="Sweep-Translate" />
              <Item n="project" t="Project" />
            </Cols>
            <Cols w="w-[42px]">
              <div className="h-[14.5px]" />
              <Item n="attach" t="Attach" />
            </Cols>
          </div>
        </Group>
        <Group label="Sub Shape" w="w-[118px]">
          <div className="pl-[6px] flex">
            <Cols w="w-[65px]">
              <Item n="super" t="Super Shape" />
              <Item n="compound" t="Compound" />
              <Item n="cube" t="Remove" />
            </Cols>
            <div className="flex flex-col pt-[10px]">
              <Item n="box" t="Extract" />
              <Item n="box" t="Explode" />
            </div>
          </div>
        </Group>
        <Group label="Remove/Modify" w="w-[162px]">
          <div className="pl-[4px] flex">
            <Cols w="w-[80px]">
              <Item n="rmanual" t="Remove Manual" gap="gap-[2px]" />
              <Item n="imprint" t="Imprinted Object" gap="gap-[2px]" />
              <Item n="check" t="Check Geometry" gap="gap-[2px]" />
            </Cols>
            <Cols w="w-[78px]">
              <Item n="repair" t="Repair Shape" gap="gap-[2px]" />
              <Item n="edges" t="Edges-Domain" gap="gap-[2px]" />
              <Item n="cdup" t="Check Duplicate" gap="gap-[2px]" />
            </Cols>
          </div>
        </Group>
        <Group label="Tools" w="w-[182px]">
          <div className="pl-[3px] flex">
            <BigBtn w="w-[31px]" t1="Frame" t2="to Solid">
              <Big>
                <path d="M3 1v21" stroke="#c98b35" strokeWidth="1.4" />
                <path d="M4 12h6M9 9l4 3-4 3z" stroke="#e8912d" fill="#e8912d" />
                <path d="M14 6l6-4h5v15l-6 4h-5z" fill="#b9d3ea" stroke="#3f6fa6" />
                <path d="M19 6v15" stroke="#3f6fa6" />
              </Big>
            </BigBtn>
            <BigBtn w="w-[31px]" t1="Frame" t2="to Shell">
              <Big>
                <path d="M4 1v21" stroke="#c98b35" strokeWidth="1.4" />
                <path d="M5 12h6M10 9l4 3-4 3z" stroke="#e8912d" fill="#e8912d" />
                <path d="M17 6l5-4v15l-5 4z" fill="#d5e4f2" stroke="#3f6fa6" />
              </Big>
            </BigBtn>
            <BigBtn w="w-[67px]" t1="Terrain Geometry" t2={<>Maker<span className="text-[6px]"> ▾</span></>}>
              <Big>
                <path d="M3 22l5-6h16l-5 6z" fill="#eef3f8" stroke="#3f6fa6" />
                <path d="M14 1l3 5 6 2-4 5-5 5-3-4-6-3 5-3z" fill="#d8342b" />
                <path d="M14 1l3 5 6 2-4 2-5-3z" fill="#2aa345" />
                <path d="M14 7l5 3-5 8-3-4z" fill="#e8c32d" />
              </Big>
            </BigBtn>
            <div className="flex flex-col pt-[17px]">
              <Item n="measure" t="Measure" gap="gap-[2px]" />
            </div>
          </div>
        </Group>
        <Group label="Options" w="w-[37px]">
          <div className="w-full flex justify-center">
            <BigBtn w="w-[36px]" t1="Options">
              <Big>
                <path d="M3 1h22v15H3z" fill="#2f5a8c" />
                <path d="M5 3h7v4H5z" fill="#d8e6f3" />
                <path d="M14 3h2v11h-2zM17 3h2v11h-2zM20 3h3v11h-3z" fill="#d8e6f3" />
                <path d="M5 9h7v5H5z" fill="#7ea6cc" />
                <path d="M13 17v3M8 21h12" stroke="#3f6fa6" strokeWidth="2" />
              </Big>
            </BigBtn>
          </div>
        </Group>
      </div>
      {/* toolbar */}
      <div className="h-[18px] flex items-center pl-[5px] shrink-0">
        {tb.map((v, i) => <TbItem key={i} v={v} />)}
      </div>
      {/* main */}
      <div className="h-[568px] flex shrink-0">
        {/* left */}
        <div className="w-[310px] flex flex-col shrink-0">
          <div className="h-[4px]" />
          <div className="h-[14px] flex items-center pl-[2px] pr-[4px] justify-between text-[#555]">
            <span>Model</span>
            <div className="flex items-center gap-[4px]"><Caret /><Win k="pin" /><Win k="x" /></div>
          </div>
          <div className="h-[402px] bg-white pt-[5px] relative">
            <div className="h-[14px] flex items-center pl-[4px]">
              <div className="w-[199px] border-r border-[#e6e6e6] h-full leading-[14px]">Item</div>
              <div className="w-[46px] border-r border-[#e6e6e6] h-full leading-[14px] pl-[4px]">ID</div>
              <div className="w-[53px] border-r border-[#e6e6e6] h-full leading-[14px] pl-[3px]">Color</div>
            </div>
            <div className="relative">
              <svg viewBox="0 0 70 230" fill="none" stroke="#b5b5b5" strokeDasharray="1 1" className="absolute left-0 top-0 w-[70px] h-[230px]">
                <path d="M7.5 12V222M7.5 18h20M7.5 30h20M7.5 42h20M7.5 54h20M7.5 66h20M7.5 78h20M7.5 90h8M7.5 150h20M7.5 162h20M7.5 174h20M7.5 186h8M7.5 198h20M7.5 210h20M7.5 222h20" />
                <path d="M20.5 96V102M20.5 102h7M32.5 108V138M32.5 114h8M45.5 120V138M45.5 126h8M45.5 138h8" />
              </svg>
              <div className="relative">
                <div className="h-3 flex items-center pl-[1px] whitespace-nowrap">
                  <svg viewBox="0 0 14 14" className="w-[11px] h-[11px] shrink-0"><circle cx="7" cy="7" r="6" fill="#4a7ba8" /><path d="M4 10l2-4 4-2-2 4z" fill="#fff" /></svg>
                  <span className="ml-[4px] text-[#333]">C:\Users\Utente\Desktop\Directory\Smart working\...</span>
                </div>
                <Tree0 n="coord" t="Coordinate System" />
                <Tree0 exp={false} n="vp" t="View Point" />
                <Tree0 n="wplane" t="Work Plane" />
                <Tree0 n="vp" t="Datum" />
                <Tree0 n="matl" t="Material" />
                <Tree0 n="prop" t="Property" />
                <TreeCk pad="pl-[3px]" exp o gap="ml-[4px]" t="Geometry" />
                <TreeCk pad="pl-[16px]" exp o gap="ml-[4px]" on={false} t="Geometry Set-1" id="1" />
                <TreeCk pad="pl-[28px]" exp o gap="ml-[4px]" t="Solid [2]" />
                <TreeCk pad="pl-[52px]" gap="" t="Extrude" id="11" sw />
                <TreeCk pad="pl-[52px]" gap="" t="Cylinder" id="12" sw />
                <Tree0 exp={false} n="bedding" t="Bedding Plane" />
                <Tree0 exp={false} n="export" t="Export Shape" />
                <Tree0 n="meshc" t="Mesh Control" />
                <div className="h-3 flex items-center pl-[3px] whitespace-nowrap">
                  <Exp /><div className="ml-[4px]"><Chk /></div>
                  <div className="ml-[1px]"><TI n="meshb" /></div>
                  <span className="ml-[3px]">Mesh</span>
                </div>
                <Tree0 n="hour" t="Contact" />
                <Tree0 n="elem" t="Element Parameters" />
                <Tree0 n="hinge" t="Hinge" />
              </div>
            </div>
          </div>
          <div className="h-[15px] flex items-center pl-[2px]">
            <div className="w-[25px] h-[15px] bg-white text-center leading-[15px] text-[#333]">Model</div>
            <div className="ml-[7px]">Analysis</div>
            <div className="ml-[8px]">Results</div>
          </div>
          <div className="h-[5px]" />
          <div className="h-[20px] flex items-center pb-[2px] pl-[2px] pr-[4px] justify-between text-[#555]">
            <span>Properties</span>
            <div className="flex items-center gap-[4px]"><Caret /><Win k="pin" /><Win k="x" /></div>
          </div>
          <div className="flex-1 bg-white">
            <div className="h-[14px] bg-[#f8f8f8] flex items-center pl-[4px] gap-[7px] font-bold text-[#333]">
              <svg viewBox="0 0 4 6" className="w-[3px] h-[5px]"><path d="M0 0l4 3-4 3z" fill="#ddd" /></svg>
              <span>General</span>
            </div>
          </div>
        </div>
        {/* right */}
        <div className="flex-1 flex flex-col pl-[2px] min-w-0">
          <div className="h-[5px] shrink-0" />
          <div className="w-[944px] h-[474px] shrink-0 bg-white border-t-2 border-l-2 border-[#b0b0b0] border-r border-r-[#e6e6e6] border-b border-b-[#dddddd] ml-[2px] relative overflow-hidden -mt-[3px]">
            <Scene />
            {/* scale */}
            <div className="absolute left-[12px] top-[5px] flex flex-col text-[7px] text-[#c4c4c4]">
              <div className="flex items-center">
                <div className="w-[40px] h-[5px] border border-[#bbb] bg-[#fff] border-t-[#999]" />
                <div className="w-[40px] h-[5px] border border-[#bbb] bg-[#aaa]" />
                <span className="ml-[2px]">m</span>
              </div>
              <div className="flex"><span className="w-[38px]">0</span><span className="w-[38px]">1.08</span><span>2.15</span></div>
            </div>
            {/* viewport tools */}
            <div className="absolute left-[282px] top-[7px] flex items-center">
              {tbIcons}
              <div className="ml-[4px]"><Combo w="w-[84px]" t="Basic" /></div>
              <div className="w-[3px]" />
              <Combo w="w-[83px]" t="All Geometries (P)" />
              <div className="w-px h-[13px] bg-[#d5d5d5] ml-[4px]" />
              <div className="flex ml-[8px] items-center">
                <I n="f1" /><I n="f1" /><I n="f2" />
              </div>
              <div className="w-px h-[13px] bg-[#d5d5d5] ml-[3px]" />
              <div className="ml-[3px] flex gap-[1px]"><I n="cross" /><I n="sel2" /></div>
              <div className="w-px h-[13px] bg-[#d5d5d5] ml-[3px]" />
              <div className="ml-[3px] flex gap-[2px]"><I n="disp" /><I n="disp2" /></div>
              <div className="w-px h-[13px] bg-[#d5d5d5] ml-[3px]" />
              <div className="ml-[3px]"><I n="f2" /></div>
            </div>
            <div className="absolute left-[894px] top-[407px] text-[#7a6fc0] text-[9px]">Z</div>
            <div className="absolute left-[913px] top-[418px] text-[#7fd87f] text-[9px]">Y</div>
            <div className="absolute left-[915px] top-[452px] text-[#d0708a] text-[9px]">X</div>
          </div>
          {/* doc tabs */}
          <div className="h-[18px] shrink-0 flex items-center relative border-b border-[#e0e0e0] w-[946px]">
            <svg viewBox="0 0 4 6" className="w-[3px] h-[6px] ml-[5px] shrink-0"><path d="M3.5.5L.5 3l3 2.5z" stroke="#aaa" fill="none" /></svg>
            <svg viewBox="0 0 12 17" className="w-[12px] h-[17px] ml-[5px] shrink-0"><path d="M0 0l12 17V0z" fill="#fff" /></svg>
            <div className="h-[17px] w-[78px] bg-white flex items-center pl-[6px] shrink-0">
              <I n="docr" s="w-[11px] h-[11px]" />
              <span className="ml-[5px] font-bold text-[#444] text-[7.4px]">NXGT1.fea</span>
              <div className="ml-[6px]"><Win k="x" color="#666" /></div>
            </div>
            <svg viewBox="0 0 4 6" className="w-[3px] h-[6px] ml-auto mr-[6px] shrink-0"><path d="M.5.5L3.5 3l-3 2.5z" stroke="#aaa" fill="none" /></svg>
          </div>
          {/* output */}
          <div className="h-[6px] shrink-0" />
          <div className="h-[17px] shrink-0 flex items-center justify-between pl-[4px] pr-[24px] text-[#555] w-[968px]">
            <span>Output</span>
            <div className="flex items-center gap-[4px]"><Caret /><Win k="pin" /><Win k="x" /></div>
          </div>
          <div className="flex-1 w-[948px] bg-white pl-[2px] pt-[3px] text-[#444] text-[8.3px]">&gt; Work project is being saved by auto-save function.</div>
        </div>
      </div>
      {/* status */}
      <div className="h-[12px] bg-[#2a5699] flex items-center text-[#d5e0ef] text-[7.4px] shrink-0 relative">
        <div className="ml-[614px] w-[137px]">W: 4.61868, 8.41394</div>
        <div className="w-[224px]">X: 0~5 Y: 0~5 Z:0~10</div>
        <div className="w-[156px]">G:[2] N:[0] E:[0]</div>
        {["kN", "m", "Btu", "sec"].map((u) => (
          <div key={u} className="w-[32px] h-[10px] bg-[#d8e2ee] ml-[2px] first:ml-0 flex items-center justify-between px-[2px] text-[#333] text-[7.5px]">
            <span>{u}</span>
            <svg viewBox="0 0 8 4" className="w-[6px] h-[3px]" fill="none"><path d="M0 0l4 4 4-4" stroke="#666" /></svg>
          </div>
        ))}
      </div>
      {/* taskbar */}
      <div className="h-[27px] bg-[#1b1b1f] flex items-center shrink-0 text-white font-['Open_Sans',sans-serif]">
        <div className="w-[32px] flex justify-center">
          <svg viewBox="0 0 12 12" className="w-[12px] h-[12px]"><path d="M0 2l5-1v4.500H0zM6 1l6-1v5.500H6zM0 6.500h5V11l-5-1zM6 6.500h6V12l-6-1z" fill="#fff" /></svg>
        </div>
        <div className="w-[229px] h-[27px] bg-[#f3f3f3] flex items-center pl-[7px] text-[#444] text-[10px]">
          <svg viewBox="0 0 14 14" className="w-[13px] h-[13px]" fill="none" stroke="#333"><circle cx="8.500" cy="5.500" r="4.500" /><path d="M5 9l-4 4" /></svg>
          <span className="ml-[6px] pt-[1px] whitespace-nowrap">Scrivi qui per eseguire la ricerca</span>
        </div>
        <div className="w-[34px] flex justify-center"><div className="w-[10px] h-[10px] rounded-full border-2 border-white" /></div>
        <div className="h-full flex ml-[1px]">
          <TApp on><A><path d="M15 12c-3 4-11 3-12-3C3 3 9 1 13 3c3 2 3 5 2 7H6c0 3 5 4 8 2z" fill="#1c7ed6" /><path d="M6 7h6" stroke="#1b1b1f" strokeWidth="2" /></A></TApp>
          <TApp on><A><circle cx="9" cy="9" r="8" fill="#e0a92a" /><path d="M9 1a8 8 0 017 4H9a4 4 0 00-4 2L2.500 4A8 8 0 019 1z" fill="#d5402f" /><path d="M2.500 4L6 10l3 7a8 8 0 01-6.500-13z" fill="#2f9e44" /><circle cx="9" cy="9" r="3.500" fill="#3b7ddb" stroke="#fff" /></A></TApp>
          <TApp on><A><path d="M2 4h5l1 2h8v10H2z" fill="#e9b949" /><path d="M6 11h6v5H6z" fill="#3f85c6" /></A></TApp>
          <TApp><A><path d="M3 3l6-2 6 2-1 12-5 2-5-2z" fill="#2a1414" stroke="#8c2323" /><path d="M6 6v6M9 6v6M12 6v6" stroke="#c53b3b" /></A></TApp>
          <TApp on><div className="w-[17px] h-[17px] rounded-full bg-[#d24726] flex items-center justify-center text-[9px] font-bold">P</div></TApp>
          <TApp><A><path d="M3 5c4-4 11-3 12 0s-3 6-6 6-7-3-6-6z" fill="#d9d9e2" /><path d="M8 10l3 6M11 10l-1 6" stroke="#4a8bc4" strokeWidth="1.500" /></A></TApp>
          <TApp><div className="w-[12px] h-[17px] rounded-full border-[3px] border-[#e0202c]" /></TApp>
          <TApp><div className="w-[17px] h-[17px] bg-[#3a1a1c] border border-[#8c2323] flex items-center justify-center text-[10px] font-bold text-[#dcdcdc]">G</div></TApp>
          <TApp active on><svg viewBox="0 0 14 12" className="w-[17px] h-[15px]"><path d="M1 11C3 5 6 2 13 1L11 4C7 4 5 7 4 11z" fill="#d8392f" /><path d="M5 11C6 8 8 6 12 6L10 8C8 8 8 10 7 11z" fill="#23a98a" /></svg></TApp>
          <TApp><A><path d="M4 3h10l1 12H3z" fill="#a9c9dd" /><path d="M4 3l-1 12 2 1 1-13z" fill="#6f9ab5" /></A></TApp>
          <TApp><div className="w-[16px] h-[16px] bg-[#1b70c9] rounded-[2px] border-2 border-[#cfe4f6] flex items-center justify-center text-[9px] font-bold">C</div></TApp>
          <TApp on><div className="w-[17px] h-[17px] rounded-full bg-[#e8912d] flex items-center justify-center text-[10px] text-[#fbe3c2]">✻</div></TApp>
        </div>
        <div className="ml-auto flex items-center text-[#e6e6e6] pr-[5px]">
          <Tray><svg viewBox="0 0 10 6" className="w-[9px] h-[6px]" fill="none" stroke="#ddd"><path d="M1 5l4-4 4 4" /></svg></Tray>
          <Tray><svg viewBox="0 0 12 12" className="w-[11px] h-[11px]" fill="none" stroke="#ddd"><path d="M3 1h8v7H3zM1 3v8h5" /></svg></Tray>
          <Tray><svg viewBox="0 0 12 12" className="w-[11px] h-[11px]" fill="#ddd"><path d="M1 4h10v5H1zM3 2h3v2H3z" /></svg></Tray>
          <Tray><svg viewBox="0 0 12 12" className="w-[11px] h-[11px]" fill="none" stroke="#ddd"><path d="M1 4h2l3-3v10L3 8H1zM8 4c1 1 1 3 0 4M10 2c2 2 2 6 0 8" /></svg></Tray>
          <div className="w-[46px] text-center text-[7.6px] leading-[13px] font-['Liberation_Sans',sans-serif]">11:57<br />02/04/2020</div>
          <div className="w-[32px] flex justify-center relative">
            <svg viewBox="0 0 12 12" className="w-[12px] h-[12px]" fill="none" stroke="#ddd"><path d="M1 1h10v7H5L3 11V8H1zM3 3h6M3 5h6" /></svg>
            <div className="absolute left-[19px] top-[4px] w-[9px] h-[9px] rounded-full bg-[#1b1b1f] border border-[#ddd] text-[6px] leading-[7px] text-center">1</div>
          </div>
        </div>
      </div>
    </div>
  );
}
